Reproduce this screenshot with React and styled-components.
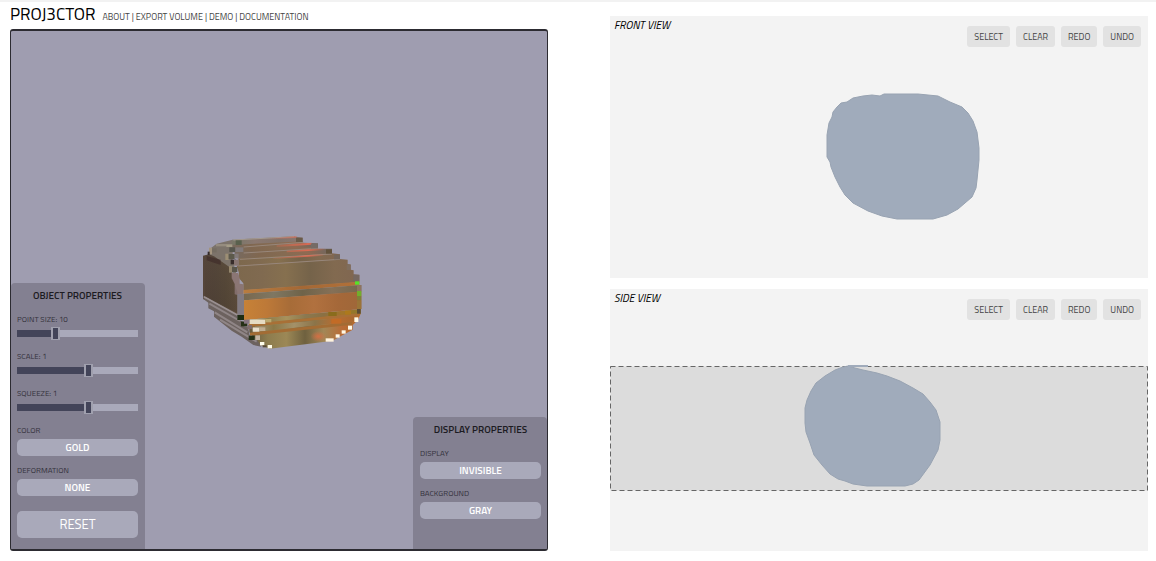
import React, { useState } from "react";
import styled, { createGlobalStyle } from "styled-components";

const GlobalStyle = createGlobalStyle`
  *, *::before, *::after { box-sizing: border-box; }
  body {
    margin: 0;
    background: #fff;
    color: #111;
    font-family: "Titillium Web", "Liberation Sans Narrow", Roboto, sans-serif;
    text-transform: uppercase;
  }
  button, input { font: inherit; text-transform: inherit; }
`;

const Page = styled.div`
  min-height: 100vh;
  display: grid;
  grid-template-columns: 1fr 1fr;
  gap: 62px;
  padding: 0 8px 10px 10px;
  border-top: 2px solid #f2f2f2;
`;

const Column = styled.div`
  display: flex;
  flex-direction: column;
`;

const Header = styled.header`
  display: flex;
  align-items: baseline;
  gap: 7px;
  height: 27px;
`;

const Logo = styled.h1`
  margin: 0;
  font-size: 17px;
  line-height: 25px;
  font-weight: 400;
  color: #000;
`;

const Nav = styled.nav`
  font-size: 9px;
  color: #444;
  white-space: nowrap;

  a { color: inherit; text-decoration: none; }
`;

const Stage = styled.main`
  position: relative;
  flex: 1;
  display: flex;
  align-items: flex-end;
  justify-content: space-between;
  min-height: 320px;
  border: solid #2c2b31;
  border-width: 2px 1px;
  border-radius: 3px;
  background: #9f9db0;
  overflow: hidden;
`;

const Scene = styled.svg`
  position: absolute;
  inset: 0;
  width: 100%;
  height: 100%;
`;

const PropertyPanel = styled.section`
  position: relative;
  display: flex;
  flex-direction: column;
  gap: 8px;
  width: 134px;
  padding: ${(p) => (p.$side === "right" ? "0 6px 30px 7px" : "0 7px 11px 6px")};
  border-radius: 4px 4px 0 0;
  background: #838091;
`;

const PanelTitle = styled.h2`
  margin: 0 0 -6px;
  font-size: 10px;
  line-height: 26px;
  font-weight: 600;
  text-align: center;
  color: #1c1b22;
`;

const Field = styled.div`
  display: flex;
  flex-direction: column;
`;

const FieldList = styled.div`
  display: flex;
  flex-direction: column;
  gap: 6px;
`;

const Label = styled.label`
  font-size: 8px;
  line-height: 16px;
  color: #34323c;
`;

const Range = styled.input`
  appearance: none;
  display: block;
  width: 100%;
  height: 13px;
  margin: 0;
  background: transparent;

  &::-webkit-slider-runnable-track {
    height: 7px;
    background: linear-gradient(to right, #434459 ${(p) => p.$fill}%, #a9a9ba ${(p) => p.$fill}%);
  }
  &::-webkit-slider-thumb {
    appearance: none;
    width: 9px;
    height: 13px;
    margin-top: -3px;
    border: solid #a0a0ae;
    border-width: 1px 2px;
    background: #434459;
  }
`;

const OptionButton = styled.button`
  height: 17px;
  margin-top: 1px;
  padding: 0;
  border: 0;
  border-radius: 5px;
  background: #a9a9ba;
  color: #fff;
  font-size: 10px;
  font-weight: 600;
  line-height: 17px;
`;

const ResetButton = styled(OptionButton)`
  height: 27px;
  margin-top: 7px;
  font-size: 13px;
  font-weight: 400;
  line-height: 27px;
`;

const Views = styled(Column)`
  gap: 11px;
  padding-top: 14px;
`;

const View = styled.section`
  position: relative;
  flex: 1;
  display: flex;
  align-items: flex-start;
  justify-content: space-between;
  min-height: 160px;
  padding: 0 7px 0 4px;
  background: #f3f3f3;
`;

const ViewTitle = styled.h2`
  position: relative;
  margin: 0;
  font-size: 11px;
  line-height: 18px;
  font-weight: 400;
  font-style: italic;
  color: #000;
`;

const Toolbar = styled.div`
  position: relative;
  display: flex;
  gap: 6px;
  padding-top: 10px;
`;

const ToolButton = styled.button`
  height: 21px;
  padding: 0 7px;
  border: 0;
  border-radius: 3px;
  background: #e2e2e2;
  color: #444;
  font-size: 9px;
`;

const links = ["About", "Export Volume", "Demo", "Documentation"];

function Slider({ id, name, min, max, step, initial }) {
  const [value, setValue] = useState(initial);
  const fill = ((value - min) / (max - min)) * 100;
  return (
    <Field>
      <Label htmlFor={id}>{name}: {value}</Label>
      <Range id={id} type="range" min={min} max={max} step={step} value={value} $fill={fill}
        onChange={(e) => setValue(Number(e.target.value))} />
    </Field>
  );
}

function Option({ id, name, value }) {
  return (
    <Field>
      <Label htmlFor={id}>{name}</Label>
      <OptionButton id={id} type="button">{value}</OptionButton>
    </Field>
  );
}

const gradients = {
  top: ["#777667", "#8b7870", "#82736a", "#8a7771"],
  ridge: ["#776a60", "#806750", "#856b52", "#8f6a52", "#6d6660"],
  plate: ["#7d684d", "#806a50", "#86704f", "#75634a", "#826a50", "#806651"],
  line: ["#b97d40", "#a46835", "#b27139"],
  mix: ["#78684f", "#7f7762", "#6f6349", "#857057", "#75664c"],
  copper: ["#c78237", "#bd7938", "#a76c38", "#b1713f", "#a56839", "#9f6739"],
  gold: ["#d6cdae", "#8e7c4a", "#a8925c", "#8b7950", "#8a7044", "#a3752a", "#8b792b"],
  goldLow: ["#a99a80", "#8b7846", "#a49169", "#8b7449", "#b76d31", "#a76830"],
  base: ["#66593c", "#8d7c4e", "#9c8856", "#6f613f", "#a28757", "#b96c36", "#b66b29"],
  side: ["#55453a", "#54463a", "#584a3a", "#62513f"],
};

const faces = [
  ["55,88 64,68 80,56 104,50 128,44 128,105 140,150 56,98", "#7c736a"],
  ["39,92 57,88 72,94 118,126 145,180 145,270 120,259 80,238 39,222", "url(#side)"],
  ["127,44 310,34 338,38 338,52 157,64 125,60", "url(#top)"],
  ["120,60 338,49 338,53 384,55 384,70 162,82 118,82", "url(#ridge)"],
  ["134,80 384,66 384,71 426,71 426,86 162,102 134,98", "url(#ridge)"],
  ["145,100 426,85 450,88 450,103 145,123", "url(#plate)"],
  ["140,122 450,102 473,104 473,117 482,119 482,134 491,136 491,148 508,150 508,172 160,196 160,175 147,160 147,145", "url(#plate)"],
  ["160,195 508,170 508,181 160,206", "url(#line)"],
  ["162,206 514,180 514,201 162,226", "url(#mix)"],
  ["162,226 505,200 514,200 514,252 160,286", "url(#copper)"],
  ["178,284 512,253 512,266 505,283 488,301 488,314 466,326 449,335 431,346 405,350 240,371 208,359 178,322", "url(#base)"],
  ["178,284 512,253 512,266 178,297", "url(#gold)"],
  ["176,297 505,265 505,273 176,306", "#a87036"],
  ["188,306 500,273 500,288 190,322", "url(#goldLow)"],
  ["180,323 487,290 487,299 180,332", "#a36c34"],
  ["125,144 145,144 149,161 149,176 160,178 160,207 162,270 142,270 142,210 134,208 134,177 125,160", "#8b7674"],
  ["142,207 162,207 162,270 142,270", "#827b82"],
  ["40,212 142,268 142,284 162,290 162,304 174,306 180,337 201,344 214,365 190,360 155,335 125,317 72,275 72,259 55,250 55,233 40,222", "#6c625f"],
];

const strokes = [
  ["M42 215 142 270", "#9a9091", 5],
  ["M58 236 150 288M74 262 172 322M90 284 200 350", "#8f8586", 6],
  ["M161 66 340 52M161 84 384 70M150 103 426 87M145 123 450 103", "#98877a", 3],
  ["M130 45 312 35", "#a49a90", 3],
];

const cells = [
  [137, 46, 18, 14, "#59604d"], [78, 57, 32, 7, "#958c7f"], [109, 58, 18, 8, "#a49c87"],
  [118, 67, 18, 14, "#56564d"], [136, 67, 24, 14, "#817a7a"], [57, 68, 9, 20, "#a3947e"],
  [66, 70, 14, 12, "#756d62"], [53, 80, 6, 10, "#352b29"], [106, 86, 10, 19, "#9c8e74"],
  [116, 87, 18, 15, "#5c594b"], [134, 86, 12, 14, "#827a78"], [117, 123, 9, 20, "#94866d"],
  [126, 126, 16, 15, "#5a564a"], [122, 104, 16, 14, "#382d2b"], [132, 104, 14, 18, "#887571"],
  [318, 38, 20, 13, "#695a48"], [363, 56, 20, 14, "#756b66"], [408, 73, 18, 13, "#62523c"],
  [432, 89, 18, 14, "#74665b"], [470, 118, 12, 17, "#7f6d5d"], [490, 149, 18, 20, "#756861"],
  [495, 169, 13, 10, "#56e229"], [501, 180, 13, 18, "#8e745f"], [501, 198, 13, 15, "#72ae2b"],
  [501, 213, 13, 13, "#7f8038"], [501, 226, 13, 26, "#9a7437"], [501, 252, 11, 14, "#5b4b34"],
  [142, 270, 20, 15, "#1e2c13"], [153, 290, 19, 14, "#253016"], [162, 284, 16, 12, "#867580"],
  [172, 300, 14, 12, "#7f6c6b"], [176, 332, 18, 13, "#253117"], [180, 284, 46, 13, "#e6dcc3"],
  [226, 282, 18, 10, "#bba970"], [188, 308, 20, 12, "#e8dfcd"], [208, 307, 18, 11, "#bfae92"],
  [196, 331, 14, 14, "#c4b5a3"], [210, 351, 13, 10, "#fffdec"], [218, 361, 12, 6, "#594b38"],
  [233, 360, 13, 10, "#fffbe9"], [407, 340, 24, 10, "#fff4df"], [437, 328, 12, 10, "#fff9e9"],
  [455, 316, 12, 10, "#fff8e5"], [474, 302, 12, 12, "#fffae8"], [493, 277, 12, 14, "#fff9e6"],
  [415, 261, 25, 12, "#8a6c1c"], [465, 257, 18, 12, "#ad791c"], [424, 282, 30, 14, "#c26b26"],
];

function VolumeScene() {
  return (
    <Scene viewBox="11 31 536 518" role="img" aria-label="Gold volume preview">
      <defs>
        {Object.entries(gradients).map(([id, colors]) => (
          <linearGradient key={id} id={id}>
            {colors.map((c, i) => <stop key={i} offset={i / (colors.length - 1)} stopColor={c} />)}
          </linearGradient>
        ))}
        <linearGradient id="glow">
          <stop offset="0" stopColor="#ee6a52" stopOpacity="0" />
          <stop offset="0.7" stopColor="#ee6a52" stopOpacity="0.8" />
          <stop offset="1" stopColor="#ee6a52" stopOpacity="0" />
        </linearGradient>
        <radialGradient id="ember">
          <stop offset="0" stopColor="#d96d42" stopOpacity="0.9" />
          <stop offset="1" stopColor="#d96d42" stopOpacity="0" />
        </radialGradient>
        <linearGradient id="shade" x2="0" y2="1">
          <stop offset="0" stopColor="#261b14" stopOpacity="0" />
          <stop offset="1" stopColor="#261b14" stopOpacity="0.15" />
        </linearGradient>
      </defs>
      <g transform="translate(190 225) scale(0.33333)">
        {faces.map(([points, fill], i) => <polygon key={i} points={points} fill={fill} />)}
        {strokes.map(([d, color, w], i) => <path key={i} d={d} stroke={color} strokeWidth={w} fill="none" />)}
        <polygon points="45,98 118,132 142,200 142,264 45,214" fill="url(#shade)" />
        <polygon points="50,93 92,104 92,120 50,106" fill="#3c2826" opacity="0.6" />
        <path d="M230 40 320 34 320 38 230 44ZM260 60 365 53 365 59 260 66ZM290 77 408 70 408 75 290 82ZM250 98 400 87 400 92 250 102Z" fill="url(#glow)" />
        <ellipse cx="385" cy="334" rx="24" ry="16" fill="url(#ember)" />
        {cells.map(([x, y, w, h, color]) => <rect key={`${x}-${y}`} x={x} y={y} width={w} height={h} fill={color} />)}
      </g>
    </Scene>
  );
}

const shapes = {
  front: "M270 80 274 78H308L328 80 340 86 352 91 358 97 363 105 367 116 369 132V144L367 164 366 172 362 181 348 193 337 199 323 203H287L272 200 258 195 243 187 235 179 230 171 225 161 221 151 220 146 217 141V119L219 107 222 101 223 96 227 91 231 87 237 86 243 82 253 80 262 79Z",
  side: "M233 78 238 77 245 79 253 81 267 84 277 87 290 92 303 99 313 105 320 113 326 121 330 133V151L328 161 320 176 309 191 303 195 295 197H257L243 195 235 192 228 190 220 185 212 176 204 166 200 154 196 143 195 134V119L197 111 201 102 206 94 215 87 225 81Z",
};

function ViewPanel({ title, band, shape }) {
  return (
    <View aria-label={title}>
      <Scene viewBox="0 0 538 262" preserveAspectRatio="xMidYMid slice" aria-hidden="true">
        {band && <rect x="0.5" y="77.5" width="537" height="124" fill="#dcdcdc" stroke="#666" strokeDasharray="5 3" />}
        <path d={shape} fill="#a0abbb" stroke="#98a3b2" strokeWidth="1" />
        {band && <path d="M238 77H258" stroke="#a0abbb" strokeWidth="2" fill="none" />}
      </Scene>
      <ViewTitle>{title}</ViewTitle>
      <Toolbar>
        {["Select", "Clear", "Redo", "Undo"].map((t) => <ToolButton key={t} type="button">{t}</ToolButton>)}
      </Toolbar>
    </View>
  );
}

export default function App() {
  return (
    <>
      <GlobalStyle />
      <Page>
        <Column>
          <Header>
            <Logo>Proj3ctor</Logo>
            <Nav>
              {links.map((l, i) => (
                <React.Fragment key={l}>{i > 0 && " | "}<a href={`#${l.toLowerCase().replace(" ", "-")}`}>{l}</a></React.Fragment>
              ))}
            </Nav>
          </Header>
          <Stage>
            <VolumeScene />
            <PropertyPanel $side="left">
              <PanelTitle>Object Properties</PanelTitle>
              <Slider id="point-size" name="Point size" min={1} max={31} step={1} initial={10} />
              <Slider id="scale" name="Scale" min={0.1} max={1.6} step={0.1} initial={1} />
              <Slider id="squeeze" name="Squeeze" min={0.1} max={1.6} step={0.1} initial={1} />
              <FieldList>
                <Option id="color" name="Color" value="Gold" />
                <Option id="deformation" name="Deformation" value="None" />
              </FieldList>
              <ResetButton type="button">Reset</ResetButton>
            </PropertyPanel>
            <PropertyPanel $side="right">
              <PanelTitle>Display Properties</PanelTitle>
              <FieldList>
                <Option id="display" name="Display" value="Invisible" />
                <Option id="background" name="Background" value="Gray" />
              </FieldList>
            </PropertyPanel>
          </Stage>
        </Column>
        <Views>
          <ViewPanel title="Front view" shape={shapes.front} />
          <ViewPanel title="Side view" band shape={shapes.side} />
        </Views>
      </Page>
    </>
  );
}
